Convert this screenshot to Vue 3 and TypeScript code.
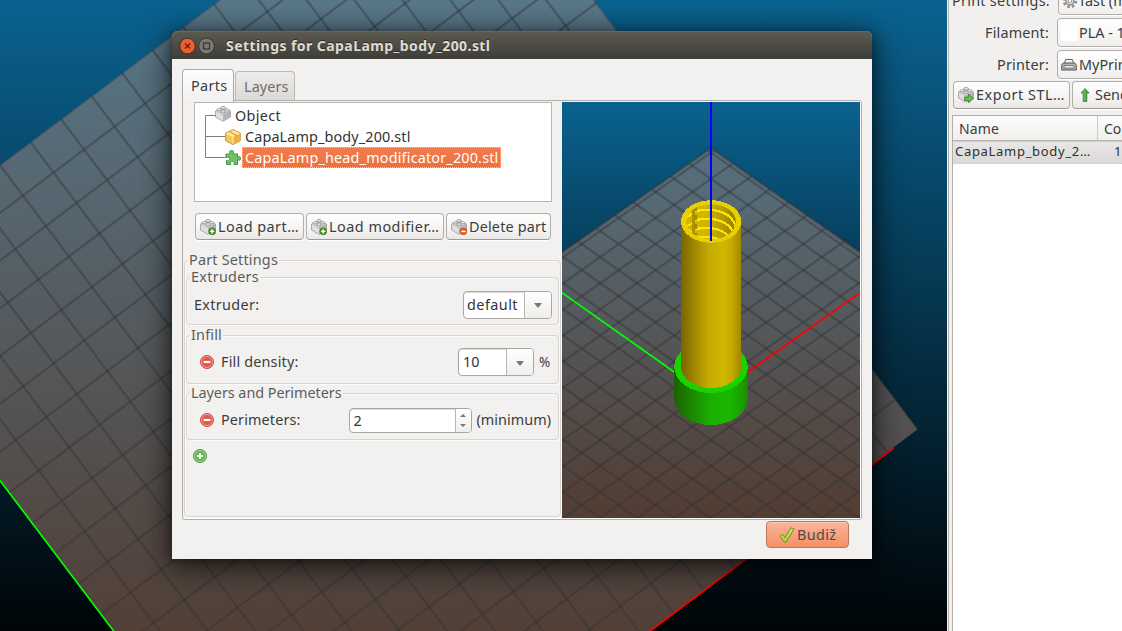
<script setup lang="ts">
import type { Directive } from 'vue'

// Tracks the text so that it takes the given width in pixels.
const vFit: Directive<HTMLElement, number> = {
  mounted(el, binding) {
    const count = (el.textContent ?? '').trim().length
    if (count < 2) return
    const natural = el.getBoundingClientRect().width
    const spacing = (binding.value - natural) / count
    el.style.letterSpacing = `${spacing.toFixed(3)}px`
  },
}

interface Line { x1: number; y1: number; x2: number; y2: number }

const range = (from: number, to: number): number[] =>
  Array.from({ length: to - from + 1 }, (_, i) => from + i)

const bedLines: Line[] = [
  ...range(0, 20).map((k) => ({ x1: -364 + 47.9 * k - 200 / 1.326, y1: -200, x2: -364 + 47.9 * k + 900 / 1.326, y2: 900 })),
  ...range(0, 20).map((k) => ({ x1: -200, y1: 165 + 47.8 * k + 150.5, x2: 950, y2: 165 + 47.8 * k - 715 })),
]

const previewLines: Line[] = range(0, 20).flatMap((k) => {
  const y = 50.7 + 26.1 * k
  const d = 200 * 0.7066
  return [
    { x1: 149, y1: y, x2: -51, y2: y + d },
    { x1: 149, y1: y, x2: 349, y2: y - d },
    { x1: 149, y1: y, x2: 349, y2: y + d },
    { x1: 149, y1: y, x2: -51, y2: y - d },
  ]
})

const partButtons = [
  { label: 'Load part…', width: 81, icon: 'brick-add', cls: 'w-load' },
  { label: 'Load modifier…', width: 110.5, icon: 'brick-add', cls: 'w-mod' },
  { label: 'Delete part', width: 77.5, icon: 'brick-del', cls: 'w-del' },
]
</script>

<template>
  <div class="desktop">
    <svg class="defs" width="0" height="0">
      <defs>
        <linearGradient id="sky" x1="0" y1="0" x2="0" y2="1">
          <stop offset="0" stop-color="#0a6290" /><stop offset="1" stop-color="#000000" />
        </linearGradient>
        <linearGradient id="body" x1="0" x2="1">
          <stop offset="0" stop-color="#7a6400" /><stop offset=".14" stop-color="#927a00" />
          <stop offset=".45" stop-color="#c4aa00" /><stop offset=".7" stop-color="#d0b700" />
          <stop offset=".86" stop-color="#c2a800" /><stop offset="1" stop-color="#a08700" />
        </linearGradient>
        <linearGradient id="head" x1="0" x2="1">
          <stop offset="0" stop-color="#1a6200" /><stop offset=".2" stop-color="#1a8200" />
          <stop offset=".5" stop-color="#1ab000" /><stop offset=".72" stop-color="#1ab800" />
          <stop offset=".9" stop-color="#1aa200" /><stop offset="1" stop-color="#1a8a00" />
        </linearGradient>
        <linearGradient id="bore" x1="0" x2="1">
          <stop offset="0" stop-color="#cdb400" /><stop offset=".4" stop-color="#d0b800" /><stop offset=".7" stop-color="#b39c00" />
          <stop offset="1" stop-color="#7e6a00" />
        </linearGradient>
        <linearGradient id="tick" x1="0" y1="0" x2="0" y2="1">
          <stop offset="0" stop-color="#d9ec6a" /><stop offset="1" stop-color="#a5cf3e" />
        </linearGradient>
        <linearGradient id="arrow" x1="0" x2="1">
          <stop offset="0" stop-color="#8fd07c" /><stop offset="1" stop-color="#2b8a2b" />
        </linearGradient>
      </defs>
      <symbol id="brick" viewBox="0 0 16 16">
        <path d="M.6 5 8 1.2 15.4 5v6L8 15.2.6 11z" fill="#d4d4d4" stroke="#8e8e8e" stroke-width=".8" />
        <path d="M8 8.6 15 5v5.900L8 14.800z" fill="#b4b4b4" /><path d="M1 5.200 8 8.600v6.200L1 10.800z" fill="#dedede" />
        <path d="M8 1.5 15 5 8 8.7 1 5z" fill="#e8e8e8" />
        <g fill="#fafafa" stroke="#868686" stroke-width=".7">
          <path d="M6 1.3v1.5c0 1 4 1 4 0V1.3" /><ellipse cx="8" cy="1.4" rx="2" ry="1" />
          <path d="M2.2 3.7v1.6c0 1 4 1 4 0V3.7" /><ellipse cx="4.2" cy="3.7" rx="2" ry="1" />
          <path d="M9.8 3.7v1.6c0 1 4 1 4 0V3.7" /><ellipse cx="11.8" cy="3.7" rx="2" ry="1" />
          <path d="M6 5.8v1.6c0 1 4 1 4 0V5.8" /><ellipse cx="8" cy="5.8" rx="2" ry="1" />
        </g>
      </symbol>
      <symbol id="brick-add" viewBox="0 0 16 16">
        <use href="#brick" width="16" height="16" />
        <circle cx="12.2" cy="12.4" r="3.4" fill="#4f9a33" stroke="#2f6a1c" stroke-width=".7" />
        <path d="M12.2 10.3v4.2M10.1 12.4h4.2" stroke="#fff" stroke-width="1.4" />
      </symbol>
      <symbol id="brick-del" viewBox="0 0 16 16">
        <use href="#brick" width="16" height="16" />
        <circle cx="12.4" cy="12.4" r="3.3" fill="#e8602c" stroke="#b9400f" stroke-width=".7" />
        <path d="M10.4 12.4h4" stroke="#fff" stroke-width="1.4" />
      </symbol>
      <symbol id="brick-go" viewBox="0 0 16 16">
        <use href="#brick" width="16" height="16" />
        <path d="M6.5 10h4V7.2l5 4.4-5 4.2V13.4h-4z" fill="#6cbf55" stroke="#2d7d25" stroke-width=".8" />
      </symbol>
      <symbol id="package" viewBox="0 0 16 16">
        <path d="M8 .6 15.3 4v7.8L8 15.5.7 11.8V4z" fill="#f6c95b" stroke="#c58a28" stroke-width=".9" />
        <path d="M8 1.2 14.6 4.2 8 7.5 1.4 4.2z" fill="#fde9a8" /><path d="M8 7.6 14.8 4.3v7.2L8 14.9z" fill="#eeb23c" />
        <path d="M8 7.6v7.2M1.4 4.2 8 7.5l6.6-3.3" fill="none" stroke="#fff3cc" stroke-width=".9" />
        <path d="m5.5 2.4 6.2 3.2v3l-1.6.7V6.2L4 3.2z" fill="#e3a23a" />
      </symbol>
      <symbol id="puzzle" viewBox="0 0 16 16">
        <path d="M1 4h4.300V3.400C4.700 2.900 4.600 2.300 4.600 1.900 4.600 1 5.400.6 6.600.6s2 .4 2 1.300c0 .5-.2 1-.7 1.500V4h4.600v3.200h.5c.5-.5 1-.6 1.400-.6.900 0 1.200.8 1.200 1.800s-.4 1.800-1.200 1.800c-.4 0-.9-.1-1.400-.6h-.5v4.800H8.900v-.6c.4-.4.5-.7.500-1.100 0-.9-.9-1.400-2-1.400s-2 .5-2 1.400c0 .4.100.7.500 1.100v.6H1.600v-4h.6c.4.4.8.5 1.200.5.800 0 1.200-.7 1.200-1.700S4.200 7 3.400 7c-.4 0-.8.100-1.200.5H1z" fill="#6cc565" stroke="#3c9140" stroke-width="1" />
      </symbol>
      <symbol id="remove" viewBox="0 0 14 14">
        <circle cx="7" cy="7" r="6.5" fill="#e4564c" stroke="#c5443b" stroke-width=".9" />
        <circle cx="7" cy="7" r="5.5" fill="none" stroke="#f5a59b" stroke-width=".9" />
        <path d="M3.6 7h6.8" stroke="#fff" stroke-width="2.2" />
      </symbol>
      <symbol id="add" viewBox="0 0 14 14">
        <circle cx="7" cy="7" r="6.5" fill="#62b350" stroke="#3f8f38" stroke-width=".9" />
        <circle cx="7" cy="7" r="5.5" fill="none" stroke="#a9dc98" stroke-width=".9" />
        <path d="M7 3.9v6.2M3.9 7h6.2" stroke="#fff" stroke-width="2.2" />
      </symbol>
    </svg>

    <svg class="scene" width="947" height="631" viewBox="0 0 947 631">
      <defs><clipPath id="bedClip"><path d="M-151.5 279 458.4-180 917.7 429.3 308 888.8z" /></clipPath></defs>
      <rect width="947" height="662" fill="url(#sky)" />
      <g clip-path="url(#bedClip)">
        <rect x="-200" y="-200" width="1200" height="1100" fill="rgb(204,153,128)" fill-opacity=".4" />
        <g stroke="#333" stroke-opacity=".42" stroke-width="2.2">
          <line v-for="(l, i) in bedLines" :key="i" v-bind="l" />
        </g>
      </g>
      <path d="M0 480.5 114 631.5" stroke="#0f0" stroke-width="1.7" />
      <path d="M649.5 631.5 893.7 448.3" stroke="#f00" stroke-width="1.7" />
    </svg>

    <aside class="sidebar">
      <div class="presets">
        <div class="preset"><span v-fit="98">Print settings:</span>
          <div class="choice">
            <svg width="16" height="16" viewBox="0 0 16 16"><circle cx="8" cy="8" r="5.8" fill="none" stroke="#8f8f8f" stroke-width="3" stroke-dasharray="2.5 2.05" /><circle cx="8" cy="8" r="4" fill="#ddd" stroke="#8f8f8f" stroke-width="1.5" /><circle cx="8" cy="8" r="1.7" fill="#fff" stroke="#999" /></svg>
            <span>fast (modified)</span></div>
        </div>
        <div class="preset"><span v-fit="64">Filament:</span>
          <div class="choice"><i class="swatch"></i><span>PLA - 1.75</span></div>
        </div>
        <div class="preset"><span v-fit="52">Printer:</span>
          <div class="choice">
            <svg width="16" height="16" viewBox="0 0 16 16"><path d="M3.5 6.500 4.500 2.500h7l1 4" fill="#f5f5f5" stroke="#666" /><path d="M.7 8.500c0-1.500 1-2.500 2.300-2.500h10c1.300 0 2.300 1 2.300 2.500v4.500H.7z" fill="#b5b5b5" stroke="#555" /><path d="M3 8.500h10v2.500H3z" fill="#efefef" stroke="#666" stroke-width=".8" /></svg>
            <span>MyPrinter</span></div>
        </div>
      </div>
      <div class="actions">
        <div class="btn w-exp"><svg width="16" height="16"><use href="#brick-go" /></svg><span v-fit="89">Export STL…</span></div>
        <div class="btn w-send">
          <svg width="16" height="16" viewBox="0 0 16 16"><path d="M8 1.5 12 6H9.8v8.5H6.2V6H4z" fill="url(#arrow)" stroke="#2f7f2d" stroke-width=".8" /></svg>
          <span>Send to printer</span></div>
      </div>
      <div class="list">
        <div class="head"><div class="h1"><span v-fit="40">Name</span></div><div class="h2">Copies</div></div>
        <div class="item"><div class="c1"><span v-fit="136">CapaLamp_body_2…</span></div><div class="c2">1</div></div>
      </div>
    </aside>

    <section class="dialog">
      <header class="title">
        <svg width="36" height="18" viewBox="0 0 36 18">
          <circle cx="8.5" cy="9" r="7.8" fill="#ec5f32" stroke="#3a2a22" stroke-width=".9" />
          <path d="m6 6.5 5 5m0-5-5 5" stroke="#6b2410" stroke-width="1.5" />
          <circle cx="27.5" cy="9" r="7.8" fill="#7b7a74" stroke="#33322d" stroke-width=".9" />
          <rect x="24.5" y="6" width="6" height="6" fill="none" stroke="#3a3935" stroke-width="1.3" />
        </svg>
        <span v-fit="264.5">Settings for CapaLamp_body_200.stl</span>
      </header>
      <nav class="tabs">
        <div class="tab on"><span v-fit="36.5">Parts</span></div>
        <div class="tab"><span v-fit="44.5">Layers</span></div>
      </nav>
      <div class="book">
        <div class="left">
          <div class="tree">
            <svg class="branch" width="34" height="60" viewBox="0 0 34 60"><path d="M20.5 12.5H10.5v42H30.5M10.5 33.5H30.5" fill="none" stroke="#7c7c7c" /></svg>
            <div class="node n0"><svg width="16" height="16"><use href="#brick" /></svg><span v-fit="46">Object</span></div>
            <div class="node n1"><svg width="16" height="16"><use href="#package" /></svg><span v-fit="165.5">CapaLamp_body_200.stl</span></div>
            <div class="node n1"><svg width="16" height="16"><use href="#puzzle" /></svg><div class="sel"><span v-fit="253.5">CapaLamp_head_modificator_200.stl</span></div></div>
          </div>
          <div class="tools">
            <div v-for="b in partButtons" :key="b.label" class="btn" :class="b.cls">
              <svg width="16" height="16"><use :href="'#' + b.icon" /></svg><span v-fit="b.width">{{ b.label }}</span>
            </div>
          </div>
          <div class="frame outer">
            <div class="legend"><span v-fit="91">Part Settings</span></div>
            <div class="frame g1">
              <div class="legend"><span v-fit="70">Extruders</span></div>
              <div class="row"><span v-fit="65.5">Extruder:</span>
                <div class="combo w-def"><div class="val"><span v-fit="51">default</span></div><div class="drop"><i></i></div></div>
              </div>
            </div>
            <div class="frame g2">
              <div class="legend"><span v-fit="33">Infill</span></div>
              <div class="row"><svg class="rm" width="14" height="14"><use href="#remove" /></svg><span v-fit="77.5">Fill density:</span>
                <div class="combo w-ten"><div class="val"><span v-fit="16.5">10</span></div><div class="drop"><i></i></div></div>
                <span class="unit">%</span>
              </div>
            </div>
            <div class="frame g3">
              <div class="legend"><span v-fit="152.5">Layers and Perimeters</span></div>
              <div class="row"><svg class="rm" width="14" height="14"><use href="#remove" /></svg><span v-fit="79.5">Perimeters:</span>
                <div class="combo spin"><div class="val">2</div><div class="steps"><i class="up"></i><i></i></div></div>
                <span v-fit="74.5" class="min">(minimum)</span>
              </div>
            </div>
            <svg class="plus" width="14" height="14"><use href="#add" /></svg>
          </div>
        </div>
        <svg class="preview" width="298" height="416" viewBox="0 0 298 416">
          <defs>
            <clipPath id="pvClip"><path d="M149 46-1 151V417H299V151z" /></clipPath>
            <clipPath id="boreClip"><ellipse cx="149" cy="119.8" rx="24.8" ry="17.6" /></clipPath>
          </defs>
          <rect width="298" height="416" fill="url(#sky)" />
          <g clip-path="url(#pvClip)">
            <rect width="298" height="416" fill="rgb(204,153,128)" fill-opacity=".4" />
            <g stroke="#333" stroke-opacity=".42" stroke-width="2.2">
              <line v-for="(l, i) in previewLines" :key="i" v-bind="l" />
            </g>
          </g>
          <path d="M149 46-1 151M149 46 299 151" stroke="#333" stroke-opacity=".4" stroke-width="2.5" />
          <path d="M-1 190 113 270.5" stroke="#0f0" stroke-width="1.7" />
          <path d="M185 270.5 299 190" stroke="#f00" stroke-width="1.7" />
          <g shape-rendering="crispEdges">
            <path d="M112.2 265v32a36.8 26 0 0 0 73.6 0v-32z" fill="url(#head)" />
            <ellipse cx="149" cy="265" rx="36.8" ry="26" fill="#1bd100" />
            <path d="M119 119.3v145.4a30.1 21.3 0 0 0 60.2 0V119.3z" fill="url(#body)" />
            <ellipse cx="149.1" cy="119.5" rx="30.1" ry="21.3" fill="#e8cf00" />
            <g clip-path="url(#boreClip)">
              <rect x="119" y="98" width="60" height="45" fill="url(#bore)" />
              <path d="M132 109.5Q150 105 164 112 172 117 174 126M132 118.5Q150 114 163 121 171 127 172 132M132 127.5Q150 123 163 131 168 135 169 137M132 136.5Q149 132 163 140" fill="none" stroke="#ffe600" stroke-width="2.2" />
              <path d="M125 115 131 111M125 124 131 121M125 127 131 131" stroke="#ffe600" stroke-width="2" />
              <path d="M131.5 101V138" stroke="#a89200" stroke-width="3" />
              <path d="M134 104V133" stroke="#a08a00" stroke-width="2" stroke-dasharray="5 4" />
            </g>
          </g>
          <path d="M149 0V139" stroke="#00f" stroke-width="2" />
        </svg>
      </div>
      <footer class="foot">
        <div class="ok">
          <svg width="16" height="16" viewBox="0 0 16 16"><path d="M1 9.5 3.5 7.5 6 10.5 12 .8 15 1.8 7.2 15.2H5.5z" fill="url(#tick)" stroke="#6a8f1e" stroke-width="1" stroke-linejoin="round" /></svg>
          <span v-fit="39.5">Budiž</span>
        </div>
      </footer>
    </section>
  </div>
</template>

<style>
body { margin: 0; overflow: hidden; }
</style>

<style scoped>
.desktop {
  position: relative; width: 1122px; height: 631px; overflow: hidden; display: flex; background: #000;
  font: 14.4px/20px "Noto Sans", "Open Sans", "Liberation Sans", sans-serif; color: #3c3c3c; white-space: nowrap;
}
.desktop * { box-sizing: border-box; }
span { display: inline-block; flex: none; }
svg { flex: none; display: block; }
.defs { position: absolute; }

.sidebar { width: 175px; height: 631px; overflow: hidden; background: #f1f0ee; border-left: 1px solid #f6f5f4; box-shadow: inset 1px 0 #b4b0aa; padding-left: 4px; }
.presets { display: flex; flex-direction: column; gap: 3px; margin-top: -14px; }
.preset { display: flex; justify-content: flex-end; align-items: center; gap: 8px; height: 29px; width: 275px; }
.choice { width: 170px; height: 29px; border: 1px solid #b3aea8; border-radius: 4px; background: linear-gradient(#fff, #f0efed); display: flex; align-items: center; padding-left: 3px; gap: 2px; box-shadow: 0 1px #fff; }
.swatch { width: 16px; height: 16px; background: #fff; }
.actions { display: flex; gap: 2px; margin: 2px 0 0 1px; width: 300px; }
.btn { display: flex; align-items: center; height: 28px; border: 1px solid #b3aea8; border-bottom-color: #9f9a94; border-radius: 4px; background: linear-gradient(#fefefe, #f5f4f3 60%, #e9e8e6); padding-left: 4px; gap: 2px; box-shadow: 0 1px #fff; flex: none; }
.w-exp { width: 117px; }
.w-send { width: 120px; }
.list { margin-top: 6px; border: 1px solid #b3aea8; border-right: 0; background: #fff; height: 530px; width: 300px; }
.head { display: flex; height: 25px; background: linear-gradient(#fdfdfd, #efeeec); border-bottom: 1px solid #b8b4af; font-size: 14px; line-height: 25px; }
.h1 { width: 145px; padding-left: 6px; border-right: 1px solid #cfccc8; }
.h2 { padding-left: 6px; }
.item { display: flex; height: 23px; line-height: 19px; font-size: 13px; background: linear-gradient(#e8e7e6, #dad9d7); border: 1px dotted #c4c2bf; border-left: 0; color: #2f2f2f; }
.c1 { width: 145px; padding-left: 2px; }
.c2 { padding-left: 16px; }

.dialog { position: absolute; left: 172px; top: 31px; width: 700px; height: 528px; background: #f2f1f0; border-radius: 6px 6px 0 0; box-shadow: 0 6px 30px 3px rgba(0, 0, 0, .65), 0 2px 8px rgba(0, 0, 0, .35); }
.title { height: 28px; border-radius: 6px 6px 0 0; background: linear-gradient(#5d5a50, #3e3d38); box-shadow: inset 0 1px #6b675b; display: flex; align-items: center; padding-left: 7px; gap: 11px; font-weight: 700; font-size: 14px; color: #dfdbd2; text-shadow: 0 -1px #2b2a27; }
.title svg { margin-top: 1px; }
.title span { margin-top: 2px; }
.tabs { display: flex; align-items: flex-end; height: 41px; padding-left: 10px; gap: 1px; }
.tab { width: 60px; height: 29px; border: 1px solid #bdb9b4; border-bottom: 0; border-radius: 4px 4px 0 0; background: linear-gradient(#edecea, #dcdad8); color: #6f6d6a; padding: 5px 0 0 8px; }
.tab.on { width: 52px; height: 33px; margin-bottom: -2px; background: linear-gradient(#fdfdfd, #f2f1f0); color: #3c3c3c; padding-top: 6px; border-color: #aeaaa5; position: relative; }
.book { margin-left: 10px; width: 680px; height: 420px; border: 1px solid #b3afaa; border-radius: 0 3px 3px 3px; display: flex; padding-top: 1px; box-shadow: inset -1px -1px #fff; }
.left { width: 379px; }

.tree { position: relative; margin-left: 11px; width: 358px; height: 100px; border: 1px solid #b9b5b0; background: #fff; padding-top: 2px; color: #333; }
.branch { position: absolute; left: 0; top: 0; }
.node { display: flex; align-items: center; height: 21px; position: relative; }
.n0 { padding-left: 20px; gap: 4px; }
.n1 { padding-left: 30px; gap: 4px; }
.n0 svg { margin-top: -3px; }
.sel { margin-left: -3px; height: 21px; line-height: 21px; width: 259px; padding-left: 3px; background: linear-gradient(#f37c4c, #ec7040); outline: 1px dotted #f9c3ab; outline-offset: -1px; color: #fff; }
.sel span { line-height: 22px; }
.tools { display: flex; gap: 2px; margin: 11px 0 0 12px; }
.tools .btn { height: 27px; }
.w-load { width: 109px; }
.w-mod { width: 138px; }
.w-del { width: 105px; }

.frame { border: 1px solid #d6d3d0; border-radius: 4px; box-shadow: inset 1px 1px #fbfbfa, 1px 1px #fbfbfa; }
.outer { margin: 20px 0 0 1px; width: 377px; height: 257px; }
.legend { height: 0; display: flex; align-items: center; color: #5e5c5a; margin-left: 3px; }
.legend span { background: #f2f1f0; height: 18px; line-height: 16px; padding: 0 1px; }
.frame .frame { margin-left: 1px; width: 373px; }
.g1 { height: 48px; margin-top: 16px; }
.g2 { height: 49px; margin-top: 10px; }
.g3 { height: 47px; margin-top: 9px; }
.row { display: flex; align-items: center; height: 28px; margin-top: 13px; padding: 0 7px; }
.g2 .row { margin-top: 12px; }
.g3 .row { margin-top: 12px; }
.rm { margin: 0 7px 0 6px; }
.combo { margin-left: auto; display: flex; height: 28px; border: 1px solid #aaa6a1; border-radius: 4px; background: #fff; overflow: hidden; box-shadow: inset 0 1px #dedbd8; }
.val { flex: 1; line-height: 26px; padding-left: 4px; color: #333; }
.drop { width: 27px; border-left: 1px solid #b9b5b0; background: linear-gradient(#fff, #efeeec); display: flex; align-items: center; justify-content: center; }
.drop i { border: 4.5px solid transparent; border-top: 5px solid #777; border-bottom: 0; margin-top: 2px; }
.w-def { width: 89px; margin-right: -1px; }
.w-def .val { padding-left: 3px; }
.g1 .combo { margin-top: -1px; }
.w-ten { width: 76px; }
.unit { width: 12px; margin-left: 5px; font-size: 13.5px; }
.spin { width: 123px; height: 25px; }
.spin .val { line-height: 23px; }
.steps { width: 16px; border-left: 1px solid #b9b5b0; background: linear-gradient(#fff, #efeeec); display: flex; flex-direction: column; align-items: center; justify-content: space-between; padding: 5px 0; }
.steps i { border: 3px solid transparent; border-top: 3.5px solid #777; border-bottom: 0; }
.steps .up { border-top: 0; border-bottom: 3.5px solid #777; }
.min { margin-left: 5px; }
.plus { margin: 9px 0 0 8px; }

.foot { display: flex; justify-content: flex-end; padding: 1px 23px 0 0; }
.ok { width: 83px; height: 27px; border: 1px solid #b9775c; border-radius: 4px; background: linear-gradient(#fcb598, #f58f67); display: flex; align-items: center; padding-left: 12px; gap: 2px; box-shadow: inset 0 1px #fdc9b3; color: #4c4c4c; }
</style>
